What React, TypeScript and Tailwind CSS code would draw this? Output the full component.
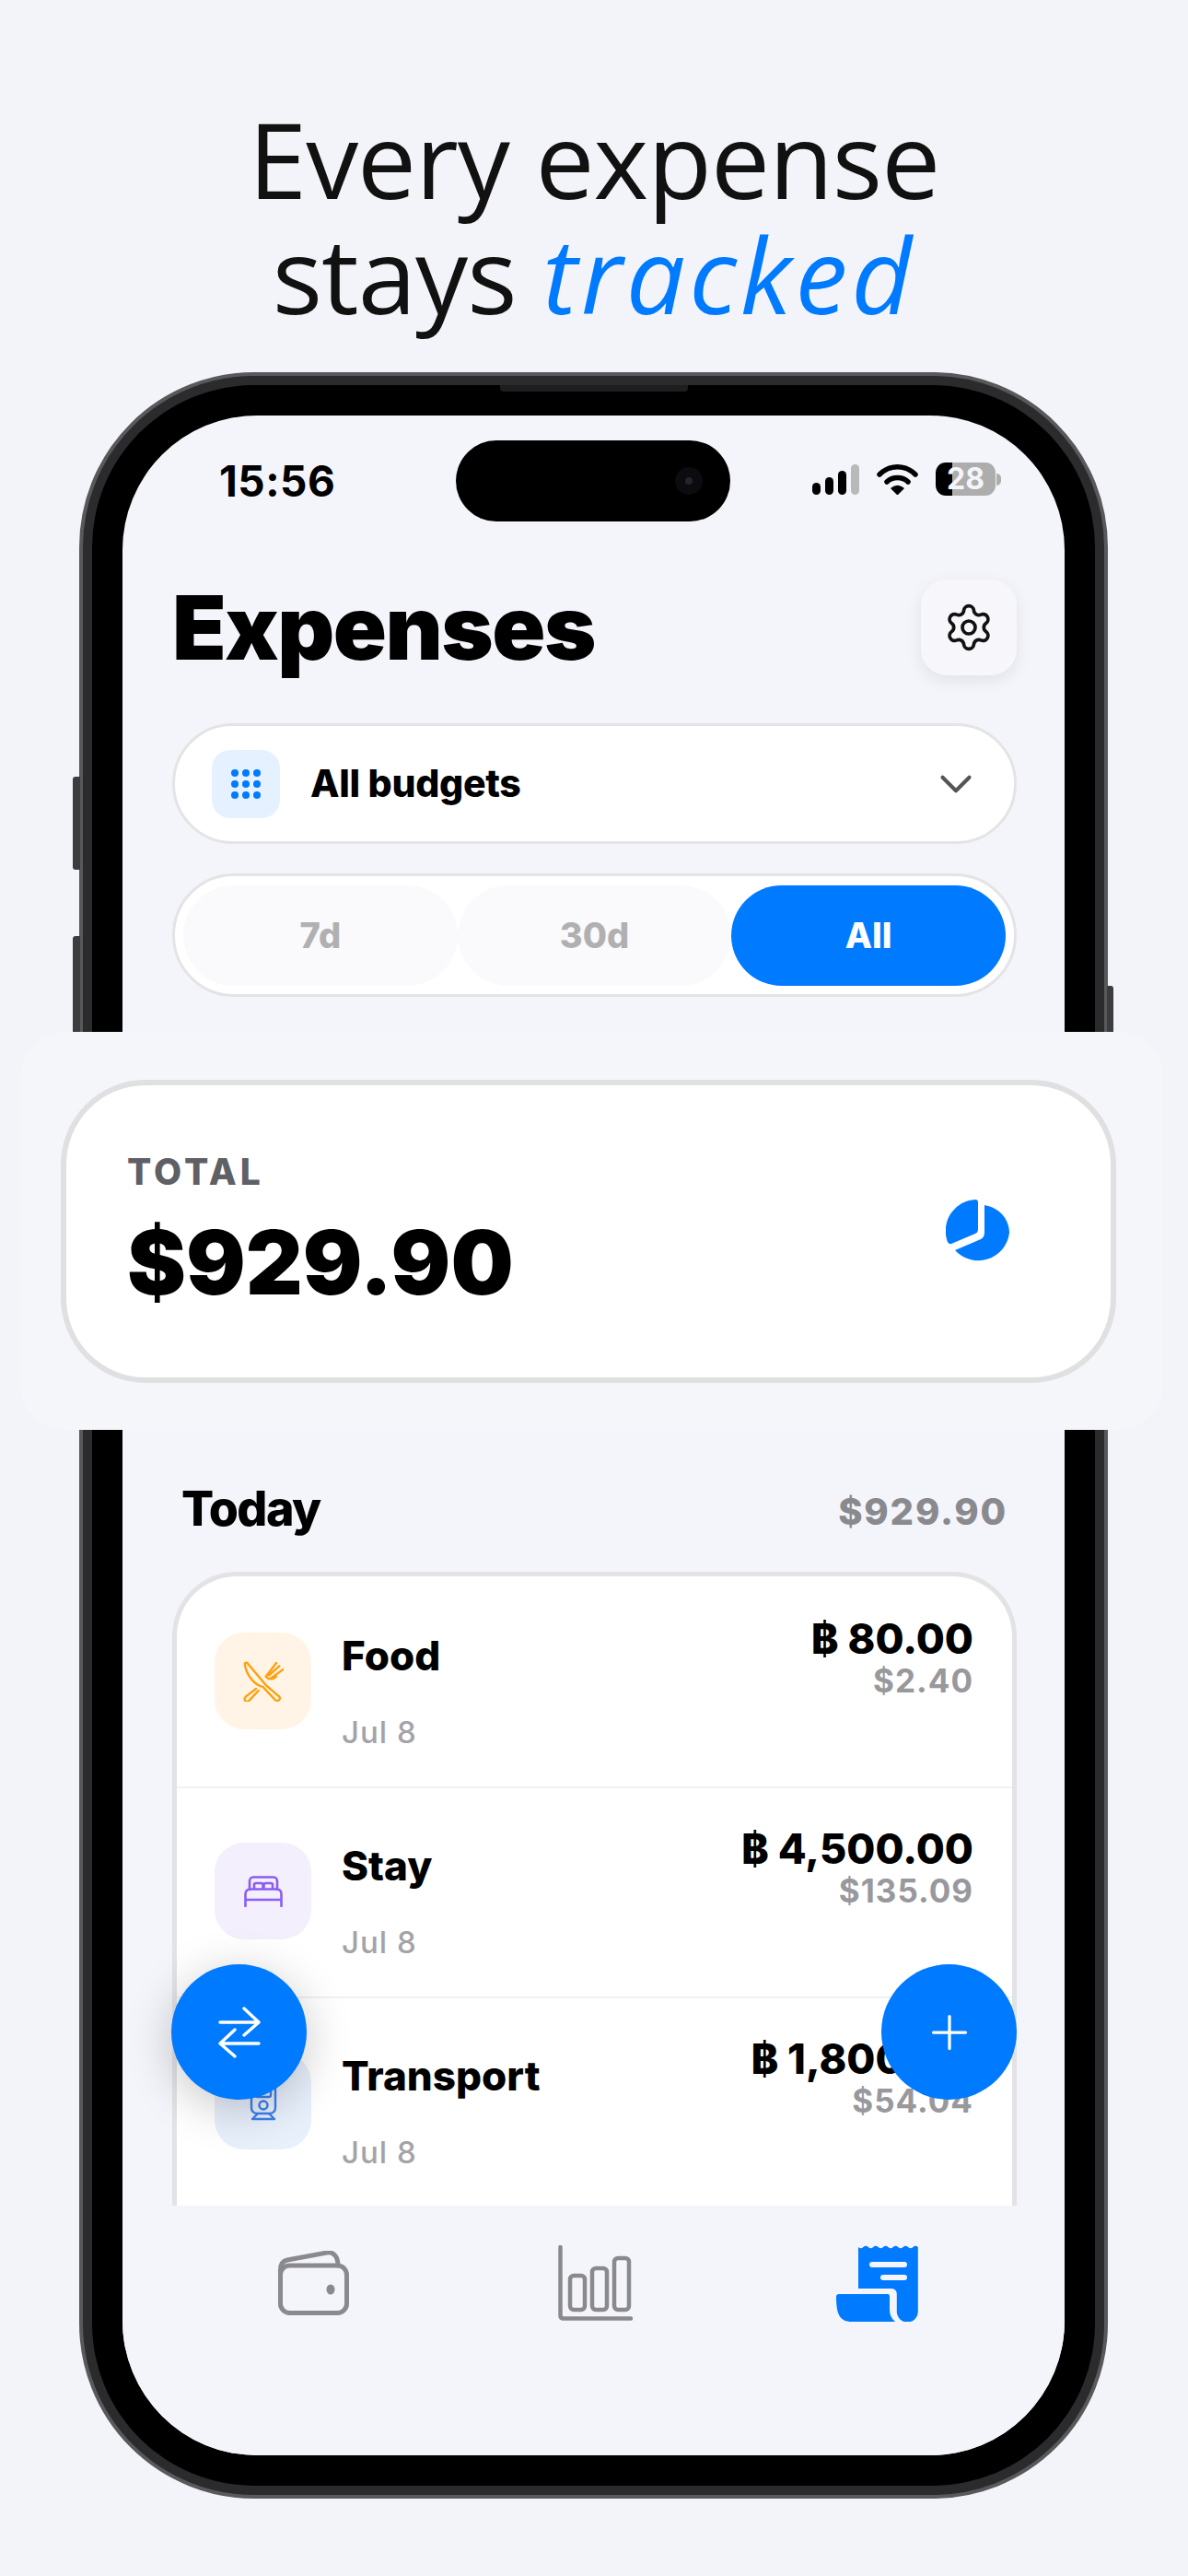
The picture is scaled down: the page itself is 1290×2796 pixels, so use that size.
import { ChevronDown, Plus, Settings } from "lucide-react";

const rows = [
  { name: "Food", amount: "฿ 80.00", usd: "$2.40", tile: "bg-[#fff4e6]", icon: <ForkKnifeIcon /> },
  { name: "Stay", amount: "฿ 4,500.00", usd: "$135.09", tile: "bg-[#f3effd]", icon: <BedIcon /> },
  { name: "Transport", amount: "฿ 1,800.00", usd: "$54.04", tile: "bg-[#e8f0fc]", icon: <TrainIcon /> },
];

function ForkKnifeIcon() {
  return (
    <svg width="44" height="44" viewBox="0 0 132 132" fill="none" stroke="#ff9f0a" strokeWidth="7" strokeLinecap="round" strokeLinejoin="round">
      <path d="M6 7C9 3 13 5 16 9L76 80L118 116C124 124 112 134 104 126L72 92C68 86 66 82 58 82C32 72 6 38 6 7Z" />
      <path d="M42 90L8 116C-2 128 12 136 20 128L50 96" />
      <path d="M74 50L108 6M90 56L132 26M74 50C84 62 98 60 108 50M84 46L118 16" />
    </svg>
  );
}

function BedIcon() {
  return (
    <svg width="42" height="34" viewBox="0 0 42 34" fill="none" stroke="#8b5cf6" strokeWidth="2.6" strokeLinecap="round" strokeLinejoin="round">
      <path d="M6 15V6C6 3 8 1.5 10 1.5H32C34 1.5 36 3 36 6V15" />
      <path d="M11 13V9.5C11 8.5 12 8 13 8H18.5C19.5 8 20.5 8.5 20.5 9.5V13M21.5 13V9.5C21.5 8.5 22.5 8 23.5 8H29C30 8 31 8.5 31 9.5V13" />
      <path d="M1.5 33V20C1.5 16.5 3.5 14.5 7 14.5H35C38.5 14.5 40.5 16.5 40.5 20V33M1.5 26H40.5" />
    </svg>
  );
}

function TrainIcon() {
  return (
    <svg width="30" height="44" viewBox="0 0 30 44" fill="none" stroke="#3b7ff0" strokeWidth="2.4" strokeLinecap="round" strokeLinejoin="round">
      <rect x="2" y="2" width="26" height="33" rx="6" />
      <rect x="7" y="8" width="16" height="9" rx="2" />
      <circle cx="15" cy="26" r="4.5" />
      <path d="M9 35L3 41H27L21 35" />
    </svg>
  );
}

function SignalIcon() {
  return (
    <svg width="51" height="33" viewBox="0 0 51 33" className="shrink-0">
      <rect x="0" y="20" width="9" height="13" rx="4.5" fill="#000" />
      <rect x="14" y="14" width="9" height="19" rx="4.5" fill="#000" />
      <rect x="28" y="7" width="9" height="26" rx="4.5" fill="#000" />
      <rect x="42" y="0" width="9" height="33" rx="4.5" fill="#b9b9bb" />
    </svg>
  );
}

function WifiIcon() {
  return (
    <svg width="45" height="33" viewBox="0 0 45 33" fill="none" stroke="#000" strokeWidth="5.5" strokeLinecap="round" className="shrink-0">
      <path d="M3 11C14 0 31 0 42 11" />
      <path d="M11 19C17 13 28 13 34 19" />
      <path d="M16 26L22.5 32.5L29 26C25 23 20 23 16 26Z" fill="#000" strokeWidth="1.5" strokeLinejoin="round" />
    </svg>
  );
}

function PieIcon() {
  return (
    <svg width="70" height="70" viewBox="0 0 70 70" fill="#007aff">
      <path d="M35 3Q35 0 32 0A34 34 0 0 0 1 43Q2 49 6 48L32 37Q35 36 35 32Z" />
      <path d="M42 6C58 9 69 21 69 36A34 34 0 0 1 10 55L38 43Q42 41 42 36Z" />
    </svg>
  );
}

function WalletIcon() {
  return (
    <svg width="77" height="70" viewBox="0 0 77 70" fill="none" stroke="#8a8a8e" strokeWidth="5" strokeLinecap="round" strokeLinejoin="round">
      <rect x="2.5" y="16" width="72" height="51.5" rx="10" />
      <path d="M2.5 27V21C2.5 15 5 11 10 10L53 2C60 1 65 6 65 16" />
      <ellipse cx="57" cy="42" rx="4.5" ry="5.5" fill="#8a8a8e" stroke="none" />
    </svg>
  );
}

function BarsIcon() {
  return (
    <svg width="81" height="82" viewBox="0 0 81 82" fill="none" stroke="#8a8a8e" strokeWidth="4.5" strokeLinecap="round" strokeLinejoin="round">
      <path d="M2.5 2V76Q2.5 79.5 6 79.5H79" />
      <rect x="13" y="33" width="16" height="37" rx="4" />
      <rect x="37" y="25" width="16" height="45" rx="4" />
      <rect x="61" y="14" width="16" height="56" rx="4" />
    </svg>
  );
}

function ReceiptIcon() {
  return (
    <svg width="89" height="83" viewBox="0 0 89 83">
      <path
        fill="#007aff"
        d="M24 2q2.7 2.5 5.4 0q2.7 -2.5 5.4 0q2.7 2.5 5.4 0q2.7 -2.5 5.4 0q2.7 2.5 5.4 0q2.7 -2.5 5.4 0q2.7 2.5 5.4 0q2.7 -2.5 5.4 0q2.7 2.5 5.4 0q2.7 -2.5 5.4 0q2.7 2.5 5.4 0q2.7 -2.5 5.4 0V72a11.5 11.5 0 0 1 -23 0V54Q66 47 60 47H24Z"
      />
      <path fill="#007aff" d="M3 53H56Q58 53 58 56V70Q58 78 64 83H17C4 83 0 75 0 56Q0 53 3 53Z" />
      <rect x="36" y="18" width="41" height="6" rx="3" fill="#f4f5fa" />
      <rect x="48" y="32" width="29" height="6" rx="3" fill="#f4f5fa" />
    </svg>
  );
}

export default function App() {
  return (
    <div className="relative h-[2796px] w-[1290px] overflow-hidden bg-[#f3f4f9] font-['Inter',sans-serif]">
      {/* Headline */}
      <h1 className="pt-[109px] text-center font-['Open_Sans',sans-serif] text-[114px] leading-[125px] font-normal tracking-[-1px] text-[#111]">
        Every expense
        <br />
        stays <em className="tracking-[4px] text-[#007aff]">tracked</em>
      </h1>

      {/* Phone */}
      <div className="relative mt-[45px] ml-[86px] h-[2308px] w-[1117px]">
        <div className="absolute top-[439px] left-[-7px] h-[101px] w-[8px] rounded-l-[3px] bg-[#3c3c3e]" />
        <div className="absolute top-[612px] left-[-7px] h-[110px] w-[8px] rounded-l-[3px] bg-[#3c3c3e]" />
        <div className="absolute top-[666px] right-[-6px] h-[60px] w-[7px] rounded-r-[3px] bg-[#3c3c3e]" />
        <div className="h-full rounded-[190px] border-[4px] border-[#59595b] bg-[#2b2b2d] p-[10px]">
          <div className="relative h-full rounded-[176px] bg-black p-[33px]">
            <div className="absolute top-0 left-[443px] h-[7px] w-[204px] rounded-b-[4px] bg-[#1e1e20]" />
            <div className="relative flex h-full flex-col overflow-hidden rounded-[146px] bg-[#f4f5fa]">
              {/* Status bar */}
              <div className="flex items-center pt-[27px] pl-[105px]">
                <span className="w-[257px] text-[46px] leading-[88px] font-bold tracking-[0.5px] text-black">15:56</span>
                <div className="flex h-[88px] w-[298px] items-center justify-end rounded-full bg-black pr-[30px]">
                  <div className="flex h-[30px] w-[30px] items-center justify-center rounded-full bg-[#0c0c10]">
                    <div className="h-[8px] w-[8px] rounded-full bg-[#25252a]" />
                  </div>
                </div>
                <div className="mb-[4px] ml-[89px] flex items-center">
                  <SignalIcon />
                  <div className="ml-[19px]">
                    <WifiIcon />
                  </div>
                  <div className="ml-[19px] flex h-[36px] w-[65px] items-center justify-center rounded-[11px] bg-[linear-gradient(90deg,#000_28%,#adadad_28%)] text-[32px] font-bold text-[#f4f5fa]">
                    28
                  </div>
                  <div className="ml-[1px] h-[13px] w-[5px] rounded-r-full bg-[#adadad]" />
                </div>
              </div>

              {/* Title */}
              <div className="mt-[63px] flex items-center justify-between pr-[52px] pl-[54px]">
                <h2 className="text-[96px] leading-[104px] font-black tracking-[-1.5px] text-black">Expenses</h2>
                <div className="flex h-[104px] w-[104px] items-center justify-center rounded-[28px] bg-[#f7f7fb] shadow-[0_6px_18px_rgba(0,0,0,0.08)]">
                  <Settings size={56} strokeWidth={1.6} color="#111" />
                </div>
              </div>

              {/* Budget selector */}
              <div className="mt-[52px] mr-[52px] ml-[54px] flex h-[131px] items-center rounded-full border-[3px] border-[#e4e4e6] bg-white pr-[34px] pl-[40px]">
                <div className="flex h-[74px] w-[74px] items-center justify-center rounded-[20px] bg-[#e5f1ff]">
                  <svg width="32" height="32" viewBox="0 0 32 32" fill="#007aff">
                    {[4, 16, 28].map((y) =>
                      [4, 16, 28].map((x) => <circle key={`${x}-${y}`} cx={x} cy={y} r="4" />)
                    )}
                  </svg>
                </div>
                <span className="ml-[33px] flex-1 text-[41px] font-extrabold tracking-[-0.3px] text-black">All budgets</span>
                <ChevronDown size={58} strokeWidth={1.7} color="#555" />
              </div>

              {/* Range tabs */}
              <div className="mt-[32px] mr-[52px] ml-[54px] flex h-[134px] items-center rounded-full border-[3px] border-[#e4e4e6] bg-white px-[9px]">
                <div className="flex h-[109px] flex-1 items-center justify-center rounded-full bg-[#fafafc] text-[38px] font-extrabold text-[#b0b0b2]">7d</div>
                <div className="flex h-[109px] flex-1 items-center justify-center rounded-full bg-[#fafafc] text-[38px] font-extrabold text-[#b0b0b2]">30d</div>
                <div className="flex h-[109px] flex-1 items-center justify-center rounded-full bg-[#007aff] text-[38px] font-extrabold text-white">All</div>
              </div>

              {/* Today header */}
              <div className="mt-[526px] flex h-[60px] items-center justify-between pr-[62px] pl-[64px]">
                <span className="text-[52px] font-extrabold tracking-[-1.5px] text-black">Today</span>
                <span className="mt-[6px] text-[40px] font-extrabold tracking-[1.8px] text-[#8a8a8e]">$929.90</span>
              </div>

              {/* List */}
              <div className="mt-[38px] mr-[52px] ml-[54px] min-h-0 flex-1 overflow-hidden">
                <div className="rounded-t-[70px] border-x-[5px] border-t-[5px] border-[#e3e3e5] bg-white">
                  {rows.map((row, i) => (
                    <div key={row.name} className={`flex h-[228px] pr-[42px] pl-[41px] ${i > 0 ? "border-t-2 border-[#f1f1f3] pt-[59px]" : "pt-[61px]"}`}>
                      <div className={`flex h-[105px] w-[105px] shrink-0 items-center justify-center rounded-[32px] ${row.tile}`}>{row.icon}</div>
                      <div className="ml-[33px] flex-1">
                        <div className="mt-[-2px] text-[44px] leading-[54px] font-extrabold text-black">{row.name}</div>
                        <div className="mt-[36px] text-[33px] leading-[40px] font-medium tracking-[1px] text-[#a3a3a8]">Jul 8</div>
                      </div>
                      <div className="mt-[-20px] text-right">
                        <div className="text-[45px] leading-[54px] font-extrabold whitespace-nowrap text-black">{row.amount}</div>
                        <div className="mt-[-4px] text-[35px] leading-[44px] font-bold tracking-[1px] text-[#98989d]">{row.usd}</div>
                      </div>
                    </div>
                  ))}
                </div>
              </div>

              {/* Tab bar */}
              <div className="grid h-[271px] shrink-0 grid-cols-[306px_306px_306px] items-start bg-[#f4f5fa] pt-[40px] pl-[54px]">
                <div className="flex h-[88px] items-center justify-center"><WalletIcon /></div>
                <div className="flex h-[88px] items-center justify-center"><BarsIcon /></div>
                <div className="flex h-[88px] items-center justify-center"><ReceiptIcon /></div>
              </div>

              {/* Floating buttons */}
              <div className="absolute top-[1681px] left-[53px] flex h-[147px] w-[147px] items-center justify-center rounded-full bg-[#007aff] shadow-[0_10px_50px_rgba(0,0,0,0.22)]">
                <svg width="46" height="56" viewBox="0 0 46 56" fill="none" stroke="#fff" strokeWidth="3.4" strokeLinecap="round" strokeLinejoin="round">
                  <path d="M2 17H44M28 2L44 17L28 31" />
                  <path d="M44 40H2M18 25L2 40L18 54" />
                </svg>
              </div>
              <div className="absolute top-[1681px] left-[824px] flex h-[147px] w-[147px] items-center justify-center rounded-full bg-[#007aff]">
                <Plus size={60} strokeWidth={1.3} color="#fff" />
              </div>
            </div>
          </div>
        </div>
      </div>

      {/* Total card, blown up over the phone */}
      <div className="absolute top-[1120px] left-[22px] h-[432px] w-[1241px] rounded-[50px] bg-[#f5f6fa] pt-[52px] pr-[51px] pb-[51px] pl-[44px]">
        <div className="flex h-full items-center justify-between rounded-[92px] border-[6px] border-[#e0e0e2] bg-white pr-[109px] pl-[66px]">
          <div>
            <div className="text-[39px] leading-[48px] font-extrabold tracking-[4px] text-[#5f5f66]">TOTAL</div>
            <div className="mt-[18px] text-[96px] leading-[112px] font-black text-black">$929.90</div>
          </div>
          <PieIcon />
        </div>
      </div>
    </div>
  );
}
